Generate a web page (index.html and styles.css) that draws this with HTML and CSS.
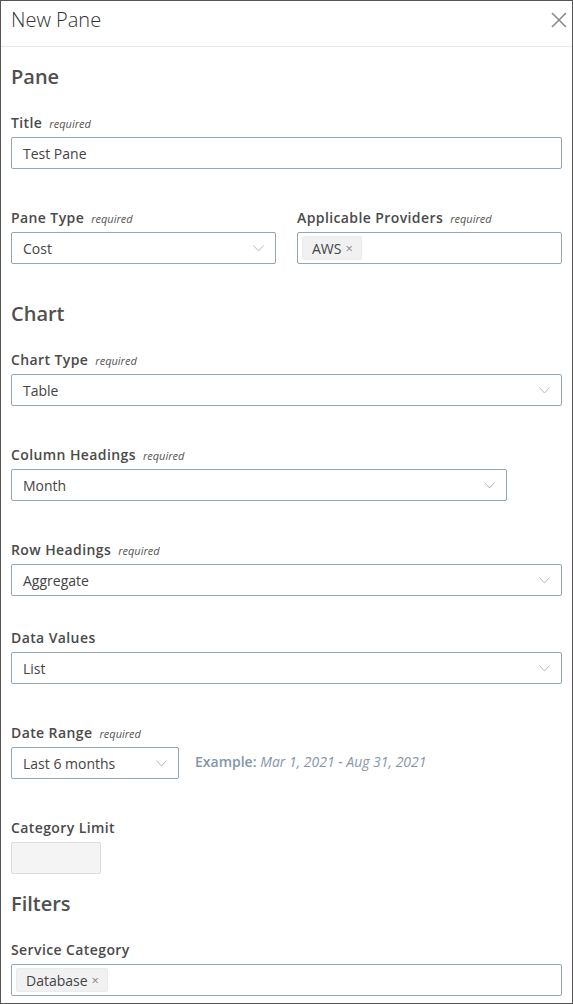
FILE: index.html
```html
<!DOCTYPE html>
<html>
<head>
<meta charset="utf-8">
<link rel="stylesheet" href="styles.css">
</head>
<body>
<div class="pane">
  <div class="header">
    <span class="header-title">New Pane</span>
    <svg class="close" width="16" height="16" viewBox="0 0 16 16"><path d="M1 1L15 15M15 1L1 15" stroke="#8a8a8a" stroke-width="1.6" fill="none"/></svg>
  </div>
  <div class="content">
    <h2 class="section first">Pane</h2>
    <div class="field">
      <div class="label">Title <span class="req">required</span></div>
      <div class="input"><span class="value">Test Pane</span></div>
    </div>
    <div class="row">
      <div class="field col">
        <div class="label">Pane Type <span class="req">required</span></div>
        <div class="input select"><span class="value">Cost</span><svg class="chev" width="11" height="7" viewBox="0 0 11 7"><path d="M0.5 0.5L5.5 6L10.5 0.5" stroke="#b8b8b8" stroke-width="1" fill="none"/></svg></div>
      </div>
      <div class="field col">
        <div class="label">Applicable Providers <span class="req">required</span></div>
        <div class="input tags"><span class="tag">AWS <span class="x">×</span></span></div>
      </div>
    </div>

    <h2 class="section">Chart</h2>
    <div class="field">
      <div class="label">Chart Type <span class="req">required</span></div>
      <div class="input select"><span class="value">Table</span><svg class="chev" width="11" height="7" viewBox="0 0 11 7"><path d="M0.5 0.5L5.5 6L10.5 0.5" stroke="#b8b8b8" stroke-width="1" fill="none"/></svg></div>
    </div>
    <div class="field">
      <div class="label">Column Headings <span class="req">required</span></div>
      <div class="input select w496"><span class="value">Month</span><svg class="chev" width="11" height="7" viewBox="0 0 11 7"><path d="M0.5 0.5L5.5 6L10.5 0.5" stroke="#b8b8b8" stroke-width="1" fill="none"/></svg></div>
    </div>
    <div class="field tight">
      <div class="label">Row Headings <span class="req">required</span></div>
      <div class="input select"><span class="value">Aggregate</span><svg class="chev" width="11" height="7" viewBox="0 0 11 7"><path d="M0.5 0.5L5.5 6L10.5 0.5" stroke="#b8b8b8" stroke-width="1" fill="none"/></svg></div>
    </div>
    <div class="field">
      <div class="label">Data Values</div>
      <div class="input select"><span class="value">List</span><svg class="chev" width="11" height="7" viewBox="0 0 11 7"><path d="M0.5 0.5L5.5 6L10.5 0.5" stroke="#b8b8b8" stroke-width="1" fill="none"/></svg></div>
    </div>
    <div class="field">
      <div class="label">Date Range <span class="req">required</span></div>
      <div class="date-row">
        <div class="input select w168"><span class="value">Last 6 months</span><svg class="chev" width="11" height="7" viewBox="0 0 11 7"><path d="M0.5 0.5L5.5 6L10.5 0.5" stroke="#b8b8b8" stroke-width="1" fill="none"/></svg></div>
        <div class="example"><b>Example:</b> <i>Mar 1, 2021 - Aug 31, 2021</i></div>
      </div>
    </div>
    <div class="field last">
      <div class="label">Category Limit</div>
      <div class="input disabled w90"></div>
    </div>

    <h2 class="section filters">Filters</h2>
    <div class="field">
      <div class="label">Service Category</div>
      <div class="input tags"><span class="tag">Database <span class="x">×</span></span></div>
    </div>
  </div>
</div>
</body>
</html>
```

FILE: styles.css
```css
* { box-sizing: border-box; }
html, body { margin: 0; padding: 0; background: #fff; }
body { font-family: "Open Sans", "Noto Sans", sans-serif; color: #444; }

.pane {
  width: 573px;
  height: 1004px;
  border: 1px solid #555;
  overflow: hidden;
  background: #fff;
}

.header {
  height: 46px;
  border-bottom: 1px solid #e8e8e8;
  display: flex;
  align-items: center;
  justify-content: space-between;
  padding: 0 5px 0 10px;
}
.header-title {
  font-size: 20px;
  font-weight: 300;
  color: #333;
  margin-top: -9px;
}
.close { margin-top: -8px; }

.content { padding: 0 10px; }

.section {
  margin: 36px 0 22px;
  font-size: 20px;
  line-height: 28px;
  font-weight: 600;
  color: #505050;
}
.section.first { margin-top: 16px; }
.section.filters { margin-top: 16px; }

.field { margin-bottom: 39px; }
.field.tight { margin-bottom: 32px; }
.field.last { margin-bottom: 16px; }
.row { display: flex; gap: 21px; margin-bottom: 0; }
.row .col { flex: 1; margin-bottom: 0; }

.label {
  height: 20px;
  font-size: 14px;
  line-height: 20px;
  font-weight: 600;
  letter-spacing: 0.4px;
  color: #4a4a4a;
  margin-bottom: 4px;
  white-space: nowrap;
}
.req {
  font-size: 11px;
  line-height: 10px;
  font-style: italic;
  font-weight: 400;
  letter-spacing: 0;
  color: #555;
  margin-left: 3px;
}

.input {
  height: 32px;
  border: 1px solid #93a6b5;
  border-radius: 2px;
  display: flex;
  align-items: center;
  padding: 0 11px;
  font-size: 14px;
  color: #444;
  background: #fff;
}
.select { justify-content: space-between; padding-right: 11px; }
.chev { margin-top: 1px; }
.w496 { width: 496px; }
.w168 { width: 168px; }
.w90 { width: 90px; }
.disabled { background: #f4f4f4; border-color: #dcdcdc; }

.tags { padding: 0 4px; }
.tag {
  display: inline-flex;
  align-items: center;
  height: 24px;
  padding: 0 8px 0 9px;
  background: #f1f1f1;
  border: 1px solid #ebebeb;
  border-radius: 2px;
  font-size: 14px;
  color: #444;
}
.tag .x { color: #888; font-size: 13px; margin-left: 4px; }

.date-row { display: flex; align-items: center; gap: 16px; }
.example { font-size: 14px; color: #8596a8; margin-top: -4px; }
.example b { font-weight: 600; }
.example i { font-style: italic; }
```
